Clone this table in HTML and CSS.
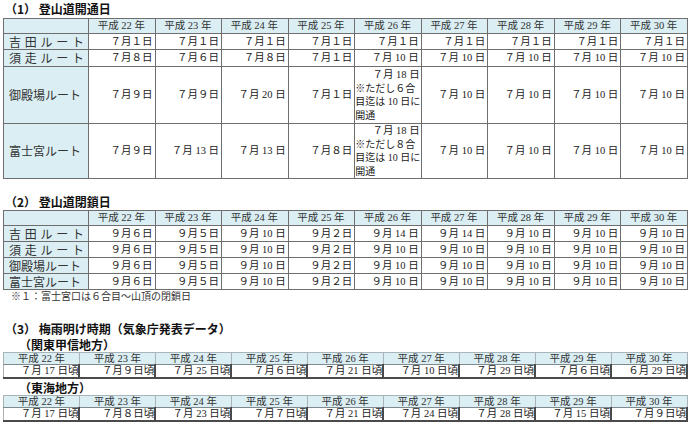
FILE: index.html
```html
<!DOCTYPE html>
<html lang="ja">
<head>
<meta charset="utf-8">
<link rel="stylesheet" href="styles.css">
</head>
<body>
<h2 class="title t1">（1） 登山道開通日</h2>
<table class="grid open">
  <colgroup><col class="c-label"><col span="9"></colgroup>
  <tr class="hdr"><th class="lab"></th><th>平成 22 年</th><th>平成 23 年</th><th>平成 24 年</th><th>平成 25 年</th><th>平成 26 年</th><th>平成 27 年</th><th>平成 28 年</th><th>平成 29 年</th><th>平成 30 年</th></tr>
  <tr class="r1"><th class="lab dist">吉田ルート</th><td>７月１日</td><td>７月１日</td><td>７月１日</td><td>７月１日</td><td>７月１日</td><td>７月１日</td><td>７月１日</td><td>７月１日</td><td>７月１日</td></tr>
  <tr class="r2"><th class="lab dist">須走ルート</th><td>７月８日</td><td>７月６日</td><td>７月８日</td><td>７月１日</td><td>７月 10 日</td><td>７月 10 日</td><td>７月 10 日</td><td>７月 10 日</td><td>７月 10 日</td></tr>
  <tr class="r3"><th class="lab">御殿場ルート</th><td>７月９日</td><td>７月９日</td><td>７月 20 日</td><td>７月１日</td><td class="note"><div class="nr">７月 18 日</div><div class="nl">※ただし６合<br>目迄は 10 日に<br>開通</div></td><td>７月 10 日</td><td>７月 10 日</td><td>７月 10 日</td><td>７月 10 日</td></tr>
  <tr class="r4"><th class="lab">富士宮ルート</th><td>７月９日</td><td>７月 13 日</td><td>７月 13 日</td><td>７月８日</td><td class="note"><div class="nr">７月 18 日</div><div class="nl">※ただし８合<br>目迄は 10 日に<br>開通</div></td><td>７月 10 日</td><td>７月 10 日</td><td>７月 10 日</td><td>７月 10 日</td></tr>
</table>

<h2 class="title t2">（2） 登山道閉鎖日</h2>
<table class="grid close">
  <colgroup><col class="c-label"><col span="9"></colgroup>
  <tr class="hdr"><th class="lab"></th><th>平成 22 年</th><th>平成 23 年</th><th>平成 24 年</th><th>平成 25 年</th><th>平成 26 年</th><th>平成 27 年</th><th>平成 28 年</th><th>平成 29 年</th><th>平成 30 年</th></tr>
  <tr><th class="lab dist">吉田ルート</th><td>９月６日</td><td>９月５日</td><td>９月 10 日</td><td>９月２日</td><td>９月 14 日</td><td>９月 14 日</td><td>９月 10 日</td><td>９月 10 日</td><td>９月 10 日</td></tr>
  <tr><th class="lab dist">須走ルート</th><td>９月６日</td><td>９月５日</td><td>９月 10 日</td><td>９月２日</td><td>９月 10 日</td><td>９月 10 日</td><td>９月 10 日</td><td>９月 10 日</td><td>９月 10 日</td></tr>
  <tr><th class="lab">御殿場ルート</th><td>９月６日</td><td>９月５日</td><td>９月 10 日</td><td>９月２日</td><td>９月 10 日</td><td>９月 10 日</td><td>９月 10 日</td><td>９月 10 日</td><td>９月 10 日</td></tr>
  <tr><th class="lab">富士宮ルート</th><td>９月６日</td><td>９月５日</td><td>９月 10 日</td><td>９月２日</td><td>９月 10 日</td><td>９月 10 日</td><td>９月 10 日</td><td>９月 10 日</td><td>９月 10 日</td></tr>
</table>
<p class="footnote">※１：富士宮口は６合目～山頂の閉鎖日</p>

<h2 class="title t3">（3） 梅雨明け時期（気象庁発表データ）</h2>
<h3 class="subtitle">（関東甲信地方）</h3>
<table class="rain">
  <tr class="hdr"><th>平成 22 年</th><th>平成 23 年</th><th>平成 24 年</th><th>平成 25 年</th><th>平成 26 年</th><th>平成 27 年</th><th>平成 28 年</th><th>平成 29 年</th><th>平成 30 年</th></tr>
  <tr class="dat"><td>７月 17 日頃</td><td>７月９日頃</td><td>７月 25 日頃</td><td>７月６日頃</td><td>７月 21 日頃</td><td>７月 10 日頃</td><td>７月 29 日頃</td><td>７月６日頃</td><td>６月 29 日頃</td></tr>
</table>
<h3 class="subtitle">（東海地方）</h3>
<table class="rain">
  <tr class="hdr"><th>平成 22 年</th><th>平成 23 年</th><th>平成 24 年</th><th>平成 25 年</th><th>平成 26 年</th><th>平成 27 年</th><th>平成 28 年</th><th>平成 29 年</th><th>平成 30 年</th></tr>
  <tr class="dat"><td>７月 17 日頃</td><td>７月８日頃</td><td>７月 23 日頃</td><td>７月７日頃</td><td>７月 21 日頃</td><td>７月 24 日頃</td><td>７月 28 日頃</td><td>７月 15 日頃</td><td>７月９日頃</td></tr>
</table>
</body>
</html>
```

FILE: styles.css
```css
html, body {
  margin: 0;
  background: #ffffff;
}
body {
  padding: 0 2px 0 3px;
  font-family: "Liberation Serif", "Noto Sans CJK JP", serif;
  color: #222222;
}
.title {
  margin: 0;
  font-family: "Noto Sans CJK JP", sans-serif;
  font-weight: 700;
  font-size: 12px;
  line-height: 18px;
  height: 18px;
  padding-left: 2px;
  color: #111111;
  white-space: pre;
}
.t2 { margin-top: 14px; height: 17px; line-height: 17px; }
.t3 { margin-top: 17px; height: 16px; line-height: 16px; }
.subtitle {
  margin: 0;
  font-family: "Noto Sans CJK JP", sans-serif;
  font-weight: 700;
  font-size: 12px;
  line-height: 15px;
  height: 15px;
  padding-left: 16px;
  color: #111111;
}
.subtitle + .rain + .subtitle { margin-top: 1px; }
.grid {
  border-collapse: collapse;
  table-layout: fixed;
  width: 685px;
  font-size: 10.5px;
}
.grid .c-label { width: 85px; }
.grid th, .grid td {
  border: 1px solid #6e6e6e;
  padding: 0 2px 0 1px;
  white-space: nowrap;
  overflow: hidden;
}
.grid .hdr th {
  background: #daeef3;
  font-weight: 400;
  text-align: center;
  height: 14px;
  line-height: 14px;
  color: #333333;
}
.grid td {
  text-align: right;
  line-height: 14px;
  font-size: 10.5px;
}
.grid .lab {
  background: #daeef3;
  font-family: "Noto Sans CJK JP", sans-serif;
  font-weight: 400;
  font-size: 12px;
  line-height: 14px;
  text-align: left;
  padding: 0 4px 0 5px;
  color: #333333;
}
.grid .lab.dist {
  text-align: justify;
  text-align-last: justify;
}
.open .r1 { height: 16px; }
.open .r2 { height: 17px; }
.open .r3 { height: 57px; }
.open .r4 { height: 54px; }
.close tr { height: 16px; }
.close .hdr { height: 15px; }
.grid td.note {
  padding: 0 1px 0 0;
  vertical-align: middle;
}
.nr { text-align: right; line-height: 13.5px; }
.nl {
  text-align: left;
  line-height: 13.5px;
  font-size: 10px;
  white-space: nowrap;
}
.footnote {
  margin: 0;
  padding-left: 8px;
  font-size: 10px;
  line-height: 14px;
  height: 14px;
  color: #333333;
}
.rain {
  border-collapse: collapse;
  table-layout: fixed;
  width: 685px;
  font-size: 10.5px;
}
.rain th, .rain td {
  white-space: nowrap;
  overflow: hidden;
  padding: 0;
}
.rain .hdr th {
  background: #daeef3;
  font-weight: 400;
  text-align: center;
  height: 11px;
  line-height: 11px;
  border: 1px solid #a9b4b8;
  border-bottom: 1px solid #7f8a8e;
  color: #333333;
}
.rain .dat td {
  text-align: right;
  height: 12px;
  line-height: 12px;
  border-left: 1px solid #b0b0b0;
  border-right: 2px solid #4a4a4a;
  border-bottom: 2px solid #4a4a4a;
}
```
